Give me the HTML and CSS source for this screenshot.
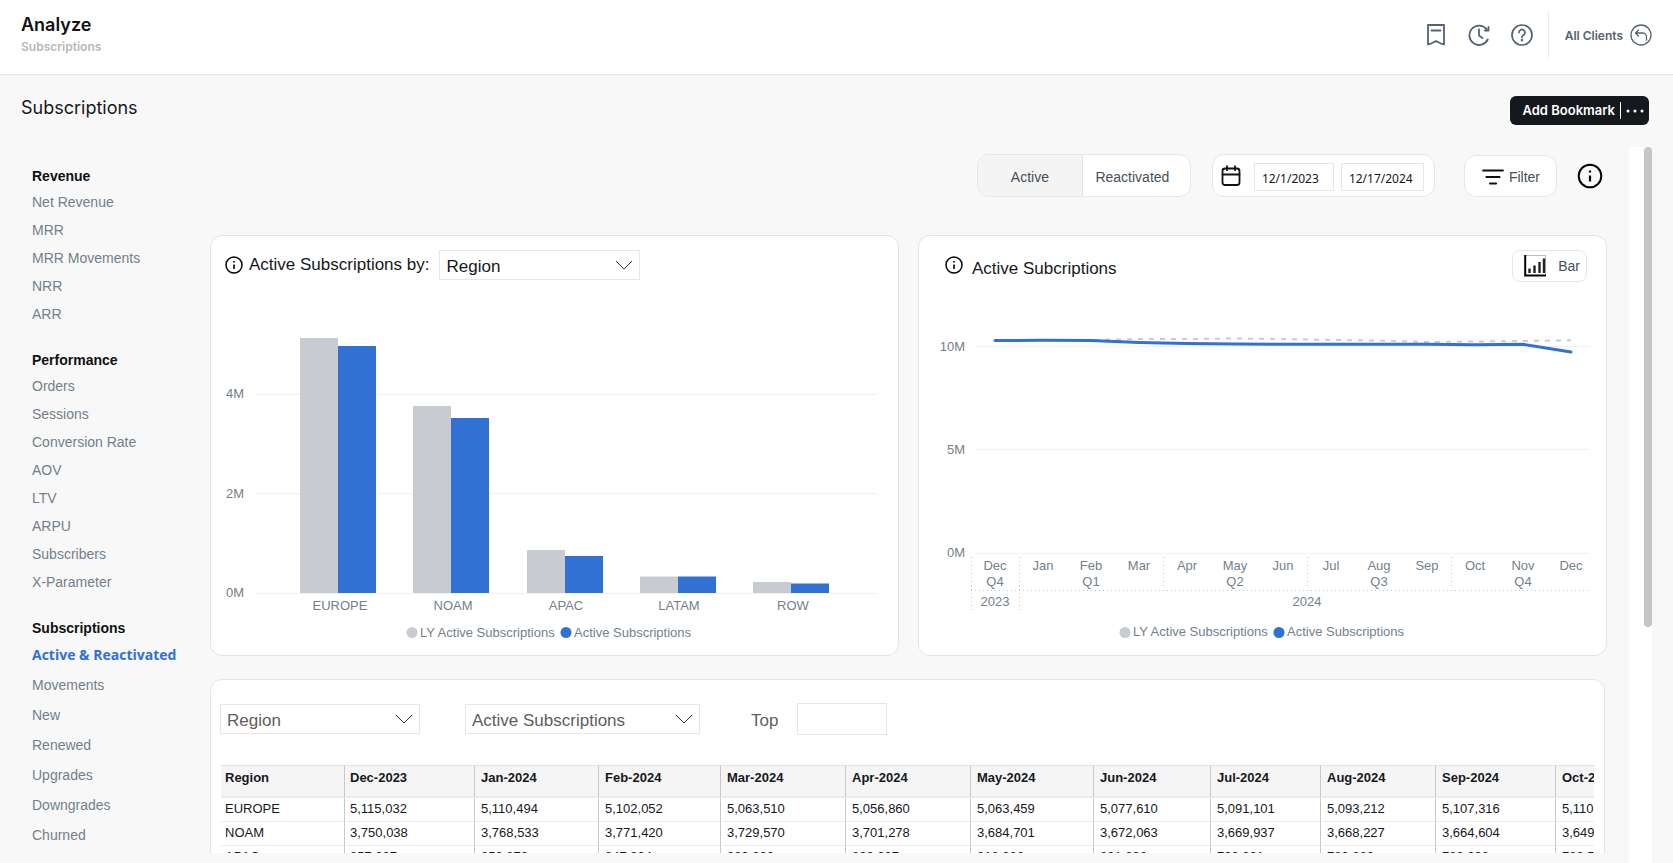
FILE: index.html
```
<!DOCTYPE html>
<html lang="en">
<head>
<meta charset="utf-8">
<title>Analyze - Subscriptions</title>
<link rel="stylesheet" href="styles.css">
</head>
<body>
<header class="topbar">
  <div class="brand">
    <h1 class="brand-title">Analyze</h1>
    <p class="brand-sub">Subscriptions</p>
  </div>
  <div class="tools">
    <button class="icon-btn" aria-label="Bookmarks"><svg width="22" height="24" viewBox="0 0 22 24" fill="none" stroke="#566270" stroke-width="1.8" stroke-linejoin="round" stroke-linecap="round"><path d="M3 2h16v19.500l-3.500-1.200-4.500-2.200-4.500 2.200L3 21.500zM6.500 7.500h9"/></svg></button>
    <button class="icon-btn" aria-label="History"><svg width="22" height="24" viewBox="0 0 22 24" fill="none" stroke="#566270" stroke-width="1.800" stroke-linecap="round" stroke-linejoin="round"><path d="M19.800 16.500A9.700 9.700 0 1 1 18.500 6M20.500 4v3.500h-3.500M11 6.500V12.500l3.500 2.500"/></svg></button>
    <button class="icon-btn" aria-label="Help"><svg width="24" height="24" viewBox="0 0 24 24" fill="none" stroke="#566270" stroke-width="1.700" stroke-linecap="round"><circle cx="12" cy="12" r="10"/><path d="M9 9.500a3 3 0 1 1 4.500 2.600c-1 .6-1.500 1-1.500 2.200"/><circle cx="12" cy="17.200" r=".5"/></svg></button>
    <a class="clients" href="#">All Clients
      <svg width="22" height="22" viewBox="0 0 22 22" fill="none" stroke="#566270" stroke-width="1.300" stroke-linecap="round" stroke-linejoin="round"><circle cx="11" cy="11" r="10"/><path d="M8.500 6L5.500 9l3 3M5.500 9h7a4 4 0 0 1 4 4v3"/></svg>
    </a>
  </div>
</header>
<div class="titlebar">
  <h2 class="page-title">Subscriptions</h2>
  <div class="bookmark">
    <button class="bookmark-add">Add Bookmark</button>
    <button class="bookmark-more" aria-label="More"><svg width="18" height="4" viewBox="0 0 18 4" fill="#fff"><circle cx="2" cy="2" r="1.500"/><circle cx="9" cy="2" r="1.500"/><circle cx="16" cy="2" r="1.500"/></svg></button>
  </div>
</div>
<div class="workspace">
  <nav class="sidebar">
    <section class="nav-group">
      <h3>Revenue</h3>
      <a href="#">Net Revenue</a><a href="#">MRR</a><a href="#">MRR Movements</a><a href="#">NRR</a><a href="#">ARR</a>
    </section>
    <section class="nav-group">
      <h3>Performance</h3>
      <a href="#">Orders</a><a href="#">Sessions</a><a href="#">Conversion Rate</a><a href="#">AOV</a><a href="#">LTV</a><a href="#">ARPU</a><a href="#">Subscribers</a><a href="#">X-Parameter</a>
    </section>
    <section class="nav-group nav-group-roomy">
      <h3>Subscriptions</h3>
      <a class="current" href="#">Active &amp; Reactivated</a><a href="#">Movements</a><a href="#">New</a><a href="#">Renewed</a><a href="#">Upgrades</a><a href="#">Downgrades</a><a href="#">Churned</a>
    </section>
  </nav>
  <main class="report">
    <div class="filters">
      <div class="segmented">
        <button class="seg seg-on">Active</button><button class="seg seg-off">Reactivated</button>
      </div>
      <div class="dates">
        <svg width="20" height="22" viewBox="0 0 20 22" fill="none" stroke="#111" stroke-width="1.800" stroke-linecap="round"><rect x="1.500" y="3.500" width="17" height="16.500" rx="2.500"/><path d="M1.500 9.500h17M6 1.200v4M14 1.200v4"/></svg>
        <input class="date" type="text" aria-label="Start date" value="12/1/2023">
        <input class="date" type="text" aria-label="End date" value="12/17/2024">
      </div>
      <button class="filter-btn"><svg width="22" height="18" viewBox="0 0 22 18" stroke="#111" stroke-width="2.200" stroke-linecap="round"><path d="M1.200 2.500h19.600M4.500 9h13M8 15.500h6"/></svg>Filter</button>
      <button class="info-btn" aria-label="Information"><svg width="26" height="26" viewBox="0 0 26 26" fill="none" stroke="#000"><circle cx="13" cy="13" r="11.300" stroke-width="2"/><path d="M13 12.500v6M13 7.500v2" stroke-width="2.200"/></svg></button>
    </div>
    <div class="charts">
      <section class="card">
        <div class="card-head head-by">
          <svg width="18" height="18" viewBox="0 0 18 18" fill="none" stroke="#000"><circle cx="9" cy="9" r="8" stroke-width="1.500"/><path d="M9 8.500v4.500M9 5v1.600" stroke-width="1.600"/></svg>
          <label for="by">Active Subscriptions by:</label>
          <select id="by" class="picker picker-dark"><option>Region</option></select>
        </div>
        <svg class="chart" viewBox="0 0 687 350" role="img" aria-label="Active subscriptions by region">
          <g class="grid"><path d="M44 104.500H666M44 203.500H666M44 303.500H666"/></g>
          <g class="ly">
            <rect x="89" y="48" width="38" height="255"/><rect x="202" y="116" width="38" height="187"/><rect x="316" y="260" width="38" height="43"/><rect x="429" y="286.500" width="38" height="16.500"/><rect x="542" y="292" width="38" height="11"/>
          </g>
          <g class="cy">
            <rect x="127" y="56" width="38" height="247"/><rect x="240" y="128" width="38" height="175"/><rect x="354" y="266" width="38" height="37"/><rect x="467" y="286.500" width="38" height="16.500"/><rect x="580" y="293.500" width="38" height="9.500"/>
          </g>
          <g class="label end"><text x="33" y="108">4M</text><text x="33" y="208">2M</text><text x="33" y="307">0M</text></g>
          <g class="label mid"><text x="129" y="320">EUROPE</text><text x="242" y="320">NOAM</text><text x="355" y="320">APAC</text><text x="468" y="320">LATAM</text><text x="582" y="320">ROW</text></g>
          <circle class="ly" cx="201" cy="342.500" r="5.500"/><circle class="cy" cx="355" cy="342.500" r="5.500"/>
          <g class="label"><text x="209" y="347">LY Active Subscriptions</text><text x="363" y="347">Active Subscriptions</text></g>
        </svg>
      </section>
      <section class="card">
        <div class="card-head head-trend">
          <svg width="18" height="18" viewBox="0 0 18 18" fill="none" stroke="#000"><circle cx="9" cy="9" r="8" stroke-width="1.500"/><path d="M9 8.500v4.500M9 5v1.600" stroke-width="1.600"/></svg>
          <h3>Active Subcriptions</h3>
          <button class="bar-btn"><svg width="22" height="22" viewBox="0 0 22 22" fill="none" stroke="#222"><path d="M1 .5h20.500V21" stroke="#bbb"/><path d="M1.200 0V20.500H22" stroke="#000" stroke-width="2"/><path d="M5.500 13.500V18M10.500 10.500V18M15.500 7v11M20 3.500V18" stroke-width="2.400"/></svg>Bar</button>
        </div>
        <svg class="chart" viewBox="0 0 687 350" role="img" aria-label="Active subscriptions by month">
          <g class="grid"><path d="M56 56.500H671M56 159.500H671M56 263.500H671"/></g>
          <path class="trend-ly" d="M76 50L172 50L220 49L268 49L316 48.500L364 49L412 50L460 50.500L508 52L556 51.500L604 51L652 50.300"/>
          <path class="trend-cy" d="M76 50.500L124 50.300L172 50.600L220 52.500L268 53.500L316 54L364 54.300L508 54.300L556 54.800L604 54.300L652 62"/>
          <g class="label end"><text x="46" y="61">10M</text><text x="46" y="164">5M</text><text x="46" y="267">0M</text></g>
          <g class="dots"><path d="M52 300.500H671M52.500 267v55M100.500 267v55M244.500 267v31M388.500 267v31M532.500 267v31"/></g>
          <g class="label mid">
            <text x="76" y="280">Dec</text><text x="124" y="280">Jan</text><text x="172" y="280">Feb</text><text x="220" y="280">Mar</text><text x="268" y="280">Apr</text><text x="316" y="280">May</text><text x="364" y="280">Jun</text><text x="412" y="280">Jul</text><text x="460" y="280">Aug</text><text x="508" y="280">Sep</text><text x="556" y="280">Oct</text><text x="604" y="280">Nov</text><text x="652" y="280">Dec</text>
            <text x="76" y="296">Q4</text><text x="172" y="296">Q1</text><text x="316" y="296">Q2</text><text x="460" y="296">Q3</text><text x="604" y="296">Q4</text>
            <text x="76" y="316">2023</text><text x="388" y="316">2024</text>
          </g>
          <circle class="ly" cx="206" cy="342.500" r="5.500"/><circle class="cy" cx="360" cy="342.500" r="5.500"/>
          <g class="label"><text x="214" y="346">LY Active Subscriptions</text><text x="368" y="346">Active Subscriptions</text></g>
        </svg>
      </section>
    </div>
    <section class="card table-card">
      <div class="table-filters">
        <select class="picker picker-dim" aria-label="Dimension"><option>Region</option></select>
        <select class="picker picker-metric" aria-label="Metric"><option>Active Subscriptions</option></select>
        <label for="top">Top</label><input id="top" class="top-input" type="text">
      </div>
      <div class="table-wrap">
        <table>
          <colgroup><col class="w124"><col class="w130"><col class="w124"><col class="w122"><col class="w125"><col class="w125"><col class="w123"><col class="w117"><col class="w110"><col class="w115"><col class="w120"><col class="w120"></colgroup>
          <thead><tr><th>Region</th><th>Dec-2023</th><th>Jan-2024</th><th>Feb-2024</th><th>Mar-2024</th><th>Apr-2024</th><th>May-2024</th><th>Jun-2024</th><th>Jul-2024</th><th>Aug-2024</th><th>Sep-2024</th><th>Oct-2024</th></tr></thead>
          <tbody>
            <tr><td>EUROPE</td><td>5,115,032</td><td>5,110,494</td><td>5,102,052</td><td>5,063,510</td><td>5,056,860</td><td>5,063,459</td><td>5,077,610</td><td>5,091,101</td><td>5,093,212</td><td>5,107,316</td><td>5,110,220</td></tr>
            <tr><td>NOAM</td><td>3,750,038</td><td>3,768,533</td><td>3,771,420</td><td>3,729,570</td><td>3,701,278</td><td>3,684,701</td><td>3,672,063</td><td>3,669,937</td><td>3,668,227</td><td>3,664,604</td><td>3,649,810</td></tr>
            <tr><td>APAC</td><td>857,237</td><td>853,873</td><td>847,924</td><td>839,203</td><td>830,207</td><td>818,236</td><td>801,296</td><td>793,221</td><td>783,662</td><td>783,398</td><td>782,510</td></tr>
          </tbody>
        </table>
      </div>
    </section>
  </main>
  <div class="track"><div class="thumb"></div></div>
</div>
</body>
</html>
```
FILE: styles.css
```
* { box-sizing: border-box; }
body {
  margin: 0;
  height: 100vh;
  display: flex;
  flex-direction: column;
  overflow: hidden;
  background: #f8f8f8;
  color: #15181c;
  font-family: "Liberation Sans", Arial, sans-serif;
  font-size: 14px;
}
h1, h2, h3, p { margin: 0; }
a { text-decoration: none; color: inherit; }
button, input, select { font: inherit; color: inherit; margin: 0; }
button { background: none; border: 0; padding: 0; }
svg { flex: none; display: block; }

.topbar {
  flex: none;
  height: 75px;
  display: flex;
  justify-content: space-between;
  padding: 12px 21px 0 21px;
  background: #fff;
  border-bottom: 1px solid #e3e4e6;
  font-family: Inter, sans-serif;
}
.brand-title { font-size: 18px; line-height: 26px; font-weight: 600; color: #111; }
.brand-sub { font-size: 12px; line-height: 18px; font-weight: 600; color: #b8b8b8; }
.tools { display: flex; align-items: flex-start; }
.icon-btn { width: 43px; height: 46px; display: flex; align-items: center; justify-content: center; }
.clients {
  display: flex;
  align-items: center;
  gap: 7px;
  height: 46px;
  margin-left: 4px;
  padding-left: 16px;
  border-left: 1px solid #ececec;
  font-size: 12px;
  font-weight: 600;
  color: #566270;
}

.titlebar {
  flex: none;
  height: 72px;
  display: flex;
  justify-content: space-between;
  align-items: flex-start;
  padding: 20px 24px 0 21px;
  font-family: Inter, sans-serif;
}
.page-title { font-size: 18px; line-height: 26px; font-weight: 400; }
.bookmark { display: flex; align-items: center; height: 29px; margin-top: 1px; border-radius: 6px; background: #15181d; color: #fff; }
.bookmark-add { padding: 0 5px 0 13px; font-size: 13px; font-weight: 600; line-height: 17px; border-right: 1px solid #fff; }
.bookmark-more { padding: 0 5px; height: 17px; }

.workspace { flex: 1; min-height: 0; display: flex; padding-right: 21px; }
.sidebar { flex: none; width: 210px; padding: 17px 0 0 32px; display: flex; flex-direction: column; gap: 20px; color: #737f8b; }
.nav-group { display: flex; flex-direction: column; }
.nav-group h3 { font-size: 14px; line-height: 24px; color: #111; }
.nav-group a { line-height: 28px; white-space: nowrap; }
.nav-group-roomy a { line-height: 30px; }
.nav-group .current { font-family: "Open Sans", sans-serif; font-weight: 700; color: #3271d4; }

.report { flex: 1; min-width: 0; margin-bottom: 10px; padding: 7px 22px 0 0; overflow: hidden; }
.filters { display: flex; justify-content: flex-end; align-items: center; height: 43px; margin-bottom: 38px; padding-right: 4px; color: #454f5b; }
.segmented { display: flex; height: 43px; margin-right: 21px; border: 1px solid #e6e6e6; border-radius: 12px; overflow: hidden; background: #fff; }
.seg { padding-top: 2px; }
.seg-on { width: 105px; background: #f4f4f4; border-right: 1px solid #e3e3e3; }
.seg-off { width: 107px; padding-right: 8px; }
.dates { display: flex; align-items: center; height: 43px; padding: 0 10px 0 8px; margin-right: 29px; border: 1px solid #e6e6e6; border-radius: 12px; background: #fff; }
.date { width: 80px; height: 28px; margin-left: 7px; margin-top: 2px; padding: 3px 7px 0; border: 1px solid #e6e6e6; background: #fff; font-family: "Noto Sans", sans-serif; font-size: 12px; color: #15181c; }
.dates svg + .date { margin-left: 13px; }
.date:last-child { width: 83px; }
.filter-btn { display: flex; align-items: center; gap: 5px; height: 42px; padding: 2px 16px 0 17px; margin-right: 20px; border: 1px solid #e6e6e6; border-radius: 12px; background: #fff; }

.charts { display: grid; grid-template-columns: 1fr 1fr; gap: 19px; margin-bottom: 23px; }
.card { border: 1px solid #e3e4e6; border-radius: 12px; background: #fff; }
.charts .card { padding: 14px 0 15px; }
.card-head { display: flex; align-items: center; height: 40px; padding-bottom: 10px; font-size: 17px; }
.head-by { gap: 6px; padding-left: 14px; }
.head-trend { gap: 9px; padding-left: 26px; padding-right: 19px; }
.card-head h3 { font-size: 17px; font-weight: 400; padding-top: 7px; }
.bar-btn { display: flex; align-items: center; gap: 12px; height: 32px; margin-left: auto; margin-top: 2px; padding: 0 6px 0 11px; border: 1px solid #e6e6e6; border-radius: 8px; font-size: 14px; color: #454f5b; }
.picker {
  height: 30px;
  padding: 2px 30px 0 6px;
  border: 1px solid #e6e6e6;
  border-radius: 0;
  appearance: none;
  font-size: 17px;
  color: #605e5c;
  background: #fff url("data:image/svg+xml,%3Csvg xmlns='http://www.w3.org/2000/svg' width='18' height='10' fill='none' stroke='%23333'%3E%3Cpath d='M1 1l8 8 8-8'/%3E%3C/svg%3E") no-repeat right 6px center;
}
.picker-dark { width: 201px; margin-left: 4px; color: #15181c; }

.chart { width: 100%; height: auto; }
.grid { stroke: #f1f1f1; }
.dots { stroke: #c4c4c4; stroke-dasharray: 1 3; fill: none; }
.ly { fill: #c8cbcf; }
.cy { fill: #3271d4; }
.trend-ly { fill: none; stroke: #c8cbcf; stroke-width: 2; stroke-dasharray: 5 6; }
.trend-cy { fill: none; stroke: #3271d4; stroke-width: 3; stroke-linecap: round; stroke-linejoin: round; }
.label { font-size: 13px; fill: #737f8b; }
.end { text-anchor: end; }
.mid { text-anchor: middle; }

.table-card { margin-right: 2px; padding: 23px 10px 0 9px; }
.table-filters { display: flex; align-items: center; height: 32px; margin-bottom: 30px; font-size: 17px; color: #605e5c; }
.table-filters label { padding-top: 3px; }
.picker-dim { width: 200px; margin-right: 45px; }
.picker-metric { width: 235px; margin-right: 51px; }
.top-input { width: 90px; height: 32px; margin-left: 19px; border: 1px solid #e6e6e6; background: #fff; }
.table-wrap { overflow: hidden; margin-left: 1px; }
table { width: 1455px; table-layout: fixed; border-collapse: separate; border-spacing: 0; font-size: 13px; }
th, td { padding: 0 5px 3px 6px; text-align: left; vertical-align: middle; border-right: 1px solid #c8c8c8; }
th { height: 33px; padding-bottom: 8px; background: #f5f5f5; border-top: 1px solid #e3e3e3; border-bottom: 2px solid #ebebeb; }
td { height: 24px; border-bottom: 1px solid #ebebeb; }
th:first-child, td:first-child { padding-left: 4px; }
th:nth-child(2), td:nth-child(2) { padding-left: 5px; }
.w110 { width: 110px; }
.w115 { width: 115px; }
.w117 { width: 117px; }
.w120 { width: 120px; }
.w122 { width: 122px; }
.w123 { width: 123px; }
.w124 { width: 124px; }
.w125 { width: 125px; }
.w130 { width: 130px; }

.track { flex: none; width: 23px; display: flex; justify-content: flex-end; background: #fff; }
.thumb { width: 8px; height: 67%; border-radius: 4px; background: #c6c6c6; }
```
